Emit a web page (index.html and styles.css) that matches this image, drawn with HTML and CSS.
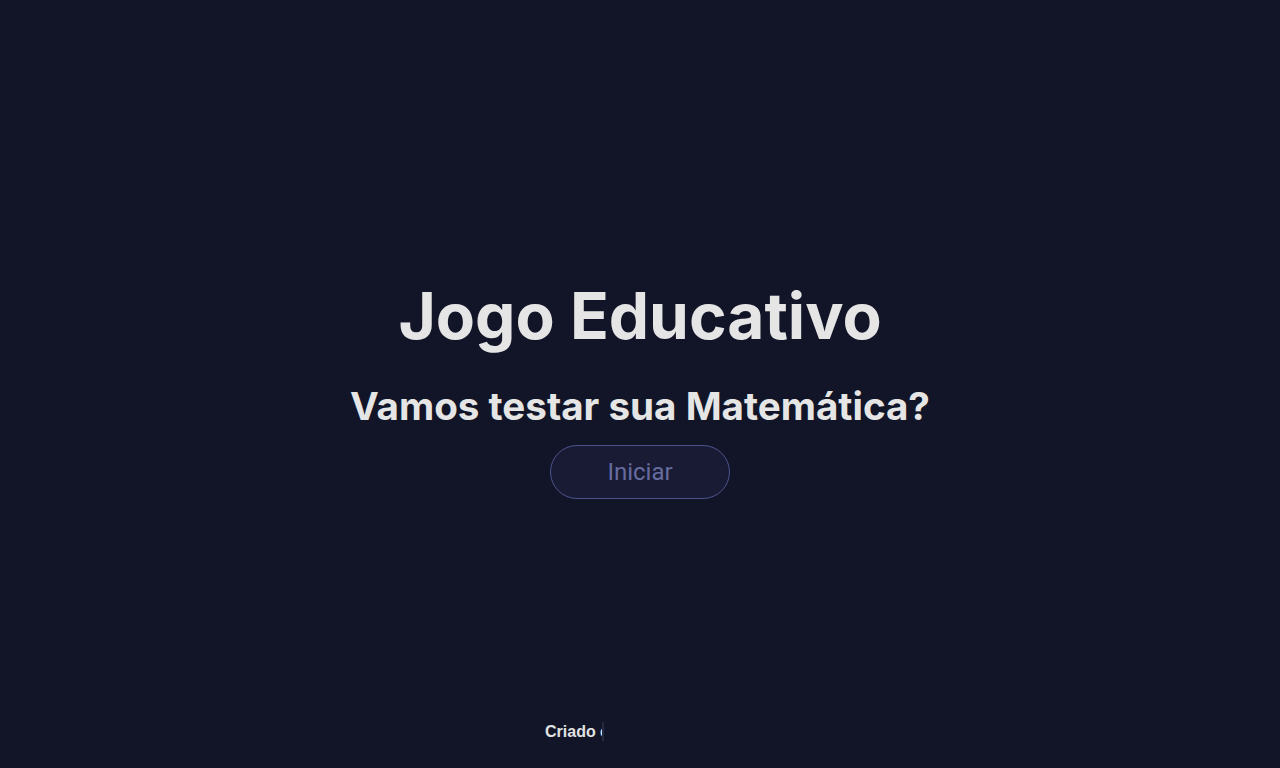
FILE: index.html
```html
<!DOCTYPE html>
<html lang="pt-BR">
<head>
<meta charset="utf-8">
<title>Jogo Educativo</title>
<link rel="stylesheet" href="styles.css">
</head>
<body>
<main class="hero">
  <h1 class="title">Jogo Educativo</h1>
  <h2 class="subtitle">Vamos testar sua Matemática?</h2>
  <button class="start">Iniciar</button>
</main>
<footer class="footer">
  <div class="typing-box"><span class="typing">Criado com dedicação</span></div>
</footer>
</body>
</html>
```
FILE: styles.css
```css
* { box-sizing: border-box; }
html, body { margin: 0; padding: 0; }
body {
  background: #111527;
  color: #e5e5e5;
  font-family: "Inter", "Liberation Sans", sans-serif;
  height: 768px;
  display: flex;
  flex-direction: column;
}
.hero {
  flex: 1;
  display: flex;
  flex-direction: column;
  align-items: center;
  justify-content: center;
  padding-top: 55px;
}
.title {
  margin: 0;
  font-family: "Inter", sans-serif;
  font-weight: 700;
  font-size: 64px;
  line-height: 1.2;
}
.subtitle {
  margin: 28px 0 0;
  font-family: "Inter", sans-serif;
  font-weight: 700;
  font-size: 38.6px;
  line-height: 1.2;
}
.start {
  margin-top: 16px;
  width: 180px;
  height: 54px;
  border-radius: 27px;
  border: 1px solid #4f5490;
  background: #181b33;
  color: #676c9f;
  font-family: "Roboto", sans-serif;
  font-size: 24px;
}
.footer {
  display: flex;
  justify-content: center;
  padding-bottom: 23px;
}
.typing-box {
  width: 190px;
}
.typing {
  display: inline-block;
  width: 59px;
  overflow: hidden;
  white-space: nowrap;
  border-right: 2px solid #262a40;
  font-family: "Liberation Sans", Arial, sans-serif;
  font-weight: 700;
  font-size: 16px;
  color: #e2e2e2;
  line-height: 19px;
}
```
